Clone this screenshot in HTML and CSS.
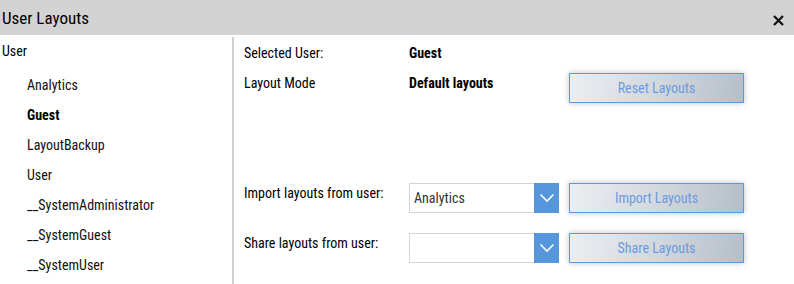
FILE: index.html
```html
<!DOCTYPE html>
<html>
<head>
<meta charset="utf-8">
<link rel="stylesheet" href="styles.css">
</head>
<body>
<div class="dialog">
  <div class="titlebar">
    <span class="title">User Layouts</span>
    <span class="close"><svg width="11" height="11" viewBox="0 0 11 11"><path d="M1 1L10 10M10 1L1 10" stroke="#111" stroke-width="2.2" fill="none"/></svg></span>
  </div>
  <div class="main">
    <div class="users">
      <div class="group">User</div>
      <ul class="list">
        <li>Analytics</li>
        <li class="sel">Guest</li>
        <li>LayoutBackup</li>
        <li>User</li>
        <li>__SystemAdministrator</li>
        <li>__SystemGuest</li>
        <li>__SystemUser</li>
      </ul>
    </div>
    <div class="details">
      <div class="row r1">
        <div class="label">Selected User:</div>
        <div class="value">Guest</div>
      </div>
      <div class="row r2">
        <div class="label">Layout Mode</div>
        <div class="value">Default layouts</div>
        <button class="btn">Reset Layouts</button>
      </div>
      <div class="row r3">
        <div class="label">Import layouts from user:</div>
        <div class="select"><span class="selval">Analytics</span><span class="arrow"><svg width="16" height="10" viewBox="0 0 16 10"><path d="M1.5 1.5L8 8L14.5 1.5" stroke="#fff" stroke-width="1.6" fill="none"/></svg></span></div>
        <button class="btn">Import Layouts</button>
      </div>
      <div class="row r4">
        <div class="label">Share layouts from user:</div>
        <div class="select"><span class="selval"></span><span class="arrow"><svg width="16" height="10" viewBox="0 0 16 10"><path d="M1.5 1.5L8 8L14.5 1.5" stroke="#fff" stroke-width="1.6" fill="none"/></svg></span></div>
        <button class="btn">Share Layouts</button>
      </div>
    </div>
  </div>
</div>
</body>
</html>
```
FILE: styles.css
```css
html, body {
  margin: 0;
  padding: 0;
  background: #fff;
}
body {
  font-family: "Roboto Condensed", "Liberation Sans Narrow", Roboto, sans-serif;
  font-stretch: condensed;
  font-size: 14px;
  color: #000;
  width: 794px;
  height: 284px;
  overflow: hidden;
}
.titlebar {
  height: 35px;
  background: #d3d3d3;
  display: flex;
  align-items: center;
  justify-content: space-between;
}
.title {
  font-size: 17px;
  padding-left: 2px;
  color: #000;
}
.close {
  display: flex;
  padding: 6px 10px 0 0;
}
.main {
  display: flex;
  height: 249px;
}
.users {
  width: 232px;
  flex: none;
}
.group {
  line-height: 32px;
  padding-left: 2px;
}
.list {
  list-style: none;
  margin: 3px 0 0 0;
  padding: 0 0 0 27px;
}
.list li {
  line-height: 30px;
  color: #111;
}
.list li.sel {
  font-weight: bold;
  color: #000;
}
.details {
  flex: 1;
  margin-top: 2px;
  border-left: 2px solid #d0d0d0;
  padding-left: 10px;
}
.row {
  display: flex;
  align-items: flex-start;
}
.r1 { margin-top: 6px; }
.r2 { margin-top: 10px; }
.r3 { margin-top: 80px; }
.r4 { margin-top: 20px; }
.label {
  width: 165px;
  flex: none;
  line-height: 20px;
}
.value {
  width: 160px;
  flex: none;
  line-height: 20px;
  font-weight: bold;
}
.btn {
  width: 175px;
  height: 30px;
  margin: 0;
  padding: 0;
  font-family: inherit;
  font-stretch: inherit;
  font-size: 14px;
  color: #6a9be0;
  border: 1px solid #5b9bd9;
  background: linear-gradient(100deg, #eceef1 0%, #d3d8de 50%, #b5bec8 100%);
  box-shadow: 0 0 6px rgba(0,0,0,0.25);
}
.select {
  width: 150px;
  height: 30px;
  margin-right: 10px;
  display: flex;
  box-sizing: border-box;
  flex: none;
}
.selval {
  flex: 1;
  border: 1px solid #d4d4d4;
  border-right: none;
  line-height: 28px;
  padding-left: 4px;
  color: #333;
}
.arrow {
  width: 25px;
  background: #5596dd;
  display: flex;
  align-items: center;
  justify-content: center;
}
```
